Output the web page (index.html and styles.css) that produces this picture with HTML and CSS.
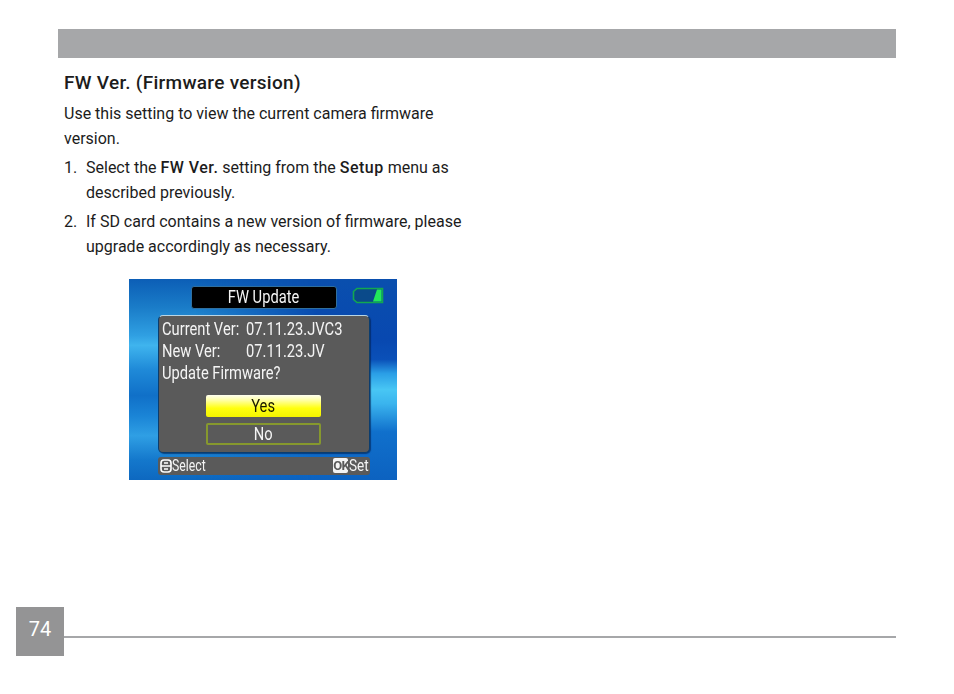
FILE: index.html
```html
<!DOCTYPE html>
<html lang="en">
<head>
<meta charset="utf-8">
<title>FW Ver. (Firmware version)</title>
<link rel="stylesheet" href="styles.css">
</head>
<body>
<div class="page">
  <div class="band"></div>
  <main class="content">
    <h1 class="heading">FW Ver. (Firmware version)</h1>
    <p class="intro">Use this setting to view the current camera firmware version.</p>
    <ol class="steps">
      <li class="step"><span class="num">1.</span><span class="step-text">Select the <b>FW Ver.</b> setting from the <b>Setup</b> menu as described previously.</span></li>
      <li class="step"><span class="num">2.</span><span class="step-text">If SD card contains a new version of firmware, please upgrade accordingly as necessary.</span></li>
    </ol>
    <div class="screen">
      <div class="screen-top">
        <div class="screen-title"><span class="narrow">FW Update</span></div>
        <svg class="battery" width="32" height="17" viewBox="0 0 32 17">
          <path d="M5 1.5H30.5V15.5H5L1.5 12.5V4.5Z" fill="#0a4a8a" stroke="#12a850" stroke-width="1.6"/>
          <path d="M21 14.5L25 2.5H29.5V14.5Z" fill="#22e85a"/>
        </svg>
      </div>
      <div class="dialog">
        <div class="dialog-lines">
          <div class="info-row"><span class="info-label">Current Ver:</span><span>07.11.23.JVC3</span></div>
          <div class="info-row"><span class="info-label">New Ver:</span><span>07.11.23.JV</span></div>
          <div class="info-row">Update Firmware?</div>
        </div>
        <div class="choice choice-yes"><span class="narrow">Yes</span></div>
        <div class="choice choice-no"><span class="narrow">No</span></div>
      </div>
      <div class="hints">
        <span class="hint"><svg class="pad" width="12" height="14" viewBox="0 0 12 14"><rect x="1" y="1" width="10" height="12" rx="3" fill="none" stroke="#fff" stroke-width="1.6"/><path d="M1 7H11M4 4H8M4 10H8" stroke="#fff" stroke-width="1.4"/></svg><span class="hint-text">Select</span></span>
        <span class="hint"><span class="ok">OK</span><span class="hint-text">Set</span></span>
      </div>
    </div>
  </main>
  <footer class="footer">
    <div class="page-num">74</div>
    <div class="rule"></div>
  </footer>
</div>
</body>
</html>
```
FILE: styles.css
```css
* { box-sizing: border-box; }
html, body { margin: 0; padding: 0; background: #fff; }
.page {
  width: 954px;
  height: 694px;
  padding-top: 29px;
  display: flex;
  flex-direction: column;
  font-family: "Roboto", "Liberation Sans", sans-serif;
  color: #1c1c1c;
}
.band { height: 29px; margin: 0 58px; background: #a6a7a9; }
.content { margin-left: 64px; width: 400px; flex: 1; }
.heading { margin: 13px 0 0; font-size: 19px; line-height: 24px; font-weight: 500; letter-spacing: 0.3px; }
.intro { margin: 7px 0 0; font-size: 16px; line-height: 24.5px; }
.steps { list-style: none; margin: 5px 0 0; padding: 0; font-size: 16px; line-height: 24.5px; }
.step { display: flex; margin-bottom: 5px; }
.num { width: 22px; flex: none; }
.step-text { flex: 1; }
.step-text b { font-weight: 500; letter-spacing: 0.5px; }
.screen {
  width: 268px;
  height: 201px;
  margin: 20px 0 0 65px;
  padding: 7px 10px 5px 29px;
  display: flex;
  flex-direction: column;
  position: relative;
  isolation: isolate;
  color: #f4f4f4;
  filter: blur(0.4px);
  background: linear-gradient(180deg, #0c5eb6 0, #1a7cc8 14%, #2f9fe2 28%, #3fb4ee 33%, #1f8ad8 45%, #1070c8 58%, #1a84d6 68%, #2f9fe4 78%, #1478cc 90%, #0d68c0 100%);
}
.screen::before {
  content: "";
  position: absolute;
  inset: 0;
  z-index: -1;
  background: linear-gradient(180deg, #0a4fae 0, #0848b0 30%, #0a50b8 40%, #2a9ee6 47%, #48c6f4 55%, #3ab4ee 62%, #1070cc 76%, #0c62c0 100%);
  -webkit-mask-image: linear-gradient(90deg, transparent 25%, #000 70%);
  mask-image: linear-gradient(90deg, transparent 25%, #000 70%);
}
.narrow { display: inline-block; transform: scaleX(.84); }
.screen-top { display: flex; align-items: flex-start; height: 29px; }
.screen-title {
  width: 146px;
  height: 23px;
  margin-left: 33px;
  flex: none;
  background: #000;
  border: 1px solid #2f6f9f;
  border-radius: 3px;
  text-align: center;
  font-size: 17.5px;
  line-height: 21px;
}
.battery { margin: 1px 0 0 15px; flex: none; }
.dialog {
  width: 212px;
  height: 138px;
  background: #5a5a5a;
  border: 1px solid #0b3d6e;
  border-top-color: #b9d6e6;
  border-radius: 5px;
  padding: 2px 0 0 3px;
  box-shadow: 1px 1px 1px rgba(0,30,80,.6);
}
.dialog-lines { height: 77px; font-size: 17.5px; line-height: 22px; }
.info-row { display: flex; white-space: nowrap; transform: scaleX(.84); transform-origin: left; }
.info-label { width: 100px; flex: none; }
.choice {
  width: 115px;
  height: 22px;
  margin-left: 44px;
  text-align: center;
  font-size: 17.5px;
  line-height: 22px;
  border-radius: 2px;
}
.choice-yes { background: linear-gradient(180deg, #fffff0 0, #ffffa0 25%, #ffff10 60%, #f4f400 100%); color: #1a1a00; }
.choice-no { margin-top: 6px; border: 2px solid #86982e; line-height: 18px; color: #f4f4f4; }
.hints {
  width: 212px;
  height: 18px;
  margin-top: 4px;
  background: #5a5a5a;
  border-radius: 3px;
  display: flex;
  justify-content: space-between;
  padding: 0 1px 1px 2px;
  font-size: 17px;
  line-height: 17px;
}
.hint { display: flex; align-items: center; }
.hint-text { display: inline-block; transform: scaleX(.72); transform-origin: left; }
.hint:last-child .hint-text { transform: scaleX(.8); transform-origin: right; margin-left: -4px; }
.pad { flex: none; }
.ok { width: 15px; background: #f4f4f4; color: #5a5a5a; font-size: 13px; font-weight: 700; line-height: 15px; text-align: center; border-radius: 2px; letter-spacing: -0.8px; }
.footer { height: 49px; margin: 0 58px 38px 16px; display: flex; align-items: flex-start; }
.page-num {
  width: 48px;
  height: 49px;
  background: #949495;
  color: #fff;
  text-align: center;
  font-size: 20px;
  line-height: 44px;
}
.rule { flex: 1; height: 2px; margin-top: 29px; background: #a6a7a9; }
```
